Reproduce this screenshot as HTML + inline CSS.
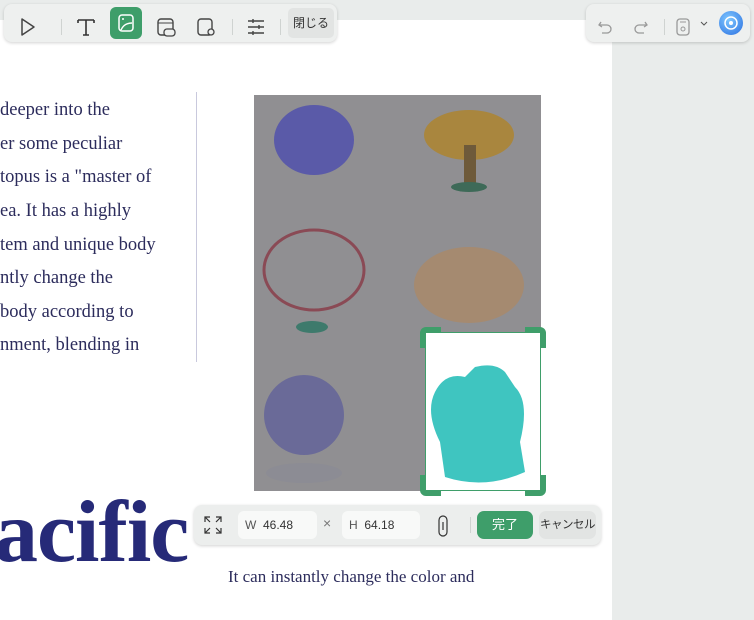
<!DOCTYPE html>
<html><head><meta charset="utf-8"><style>
*{margin:0;padding:0;box-sizing:border-box}
body{width:754px;height:604px;overflow:hidden;background:#e9eceb;position:relative;font-family:"Liberation Sans","Noto Sans CJK JP",sans-serif}
.page{position:absolute;left:0;top:20px;width:612px;height:600px;background:#fff}
.t{position:absolute;left:0;font-family:"Liberation Serif",serif;font-size:18.5px;color:#2c2c5c;white-space:nowrap}
.bar{position:absolute;background:#eef0ef;border-radius:8px;box-shadow:0 1px 3px rgba(0,0,0,.18)}
.ic{position:absolute;top:8px;width:30px;height:30px}
.sep{position:absolute;top:15px;width:1px;height:16px;background:#cfd3d1}
</style></head><body>
<div class="page"></div>
<div class="t" style="top:100px">deeper into the</div>
<div class="t" style="top:134px">er some peculiar</div>
<div class="t" style="top:167px">topus is a "master of</div>
<div class="t" style="top:201px">ea. It has a highly</div>
<div class="t" style="top:235px">tem and unique body</div>
<div class="t" style="top:268px">ntly change the</div>
<div class="t" style="top:302px"> body according to</div>
<div class="t" style="top:335px">nment, blending in</div>
<div style="position:absolute;left:196px;top:92px;width:1px;height:270px;background:#c9c9dd"></div>
<div style="position:absolute;left:-6px;top:482px;font-family:'Liberation Serif',serif;font-weight:bold;font-size:88px;letter-spacing:-1px;color:#262a78;white-space:nowrap">acific</div>
<div class="t" style="left:228px;top:567px;font-size:17px">It can instantly change the color and</div>

<svg style="position:absolute;left:254px;top:95px" width="287" height="396">
<rect width="287" height="396" fill="#908f92"/>
<ellipse cx="60" cy="45" rx="40" ry="35" fill="#5a5aa8"/>
<ellipse cx="215" cy="40" rx="45" ry="25" fill="#a9863e"/>
<rect x="210" y="50" width="12" height="40" fill="#6e5a3a"/>
<ellipse cx="215" cy="92" rx="18" ry="5" fill="#3e6a58"/>
<ellipse cx="60" cy="175" rx="50" ry="40" fill="none" stroke="#8a4a55" stroke-width="3"/>
<ellipse cx="58" cy="232" rx="16" ry="6" fill="#3e7a6c"/>
<ellipse cx="215" cy="190" rx="55" ry="38" fill="#a58a70"/>
<ellipse cx="50" cy="320" rx="40" ry="40" fill="#6a6a98"/>
<ellipse cx="50" cy="378" rx="38" ry="10" fill="#8c8c94"/>
</svg>
<div style="position:absolute;left:425px;top:332px;width:116px;height:159px;background:#fff;border:1px solid #3f9e6a"></div>
<svg style="position:absolute;left:420px;top:327px" width="126" height="169">
<path d="M15 65 Q25 45 45 50 L55 40 Q75 35 85 45 L95 60 Q110 75 100 115 L105 145 Q65 163 25 150 L20 115 Q5 85 15 65Z" fill="#3fc5c0"/>
<path d="M3 21V6a3 3 0 0 1 3-3h15M105 3h15a3 3 0 0 1 3 3v15M123 148v15a3 3 0 0 1-3 3H105M21 166H6a3 3 0 0 1-3-3v-15" stroke="#3f9e6a" stroke-width="6" fill="none"/>
</svg>

<div class="bar" style="left:4px;top:4px;width:333px;height:38px">
 <svg class="ic" style="left:8px" viewBox="0 0 30 30"><path d="M10 7l12 8-12 8z" fill="none" stroke="#444" stroke-width="1.5" stroke-linejoin="round"/><path d="M31 14l3 3 3-3" stroke="#555" fill="none"/></svg>
 <div class="sep" style="left:57px"></div>
 <svg class="ic" style="left:67px" viewBox="0 0 30 30"><path d="M7 8h16M7 8v3M23 8v3M15 8v15M12 23h6" stroke="#333" stroke-width="1.6" fill="none"/></svg>
 <div style="position:absolute;left:106px;top:3px;width:32px;height:32px;background:#3e9e6a;border-radius:6px"></div>
 <svg class="ic" style="left:107px;top:4px" viewBox="0 0 30 30"><rect x="8" y="7" width="14" height="16" rx="3" fill="none" stroke="#fff" stroke-width="1.5"/><path d="M10 22q3-7 11-7" stroke="#fff" fill="none" stroke-width="1.4"/><circle cx="12" cy="11" r="1" fill="#fff"/></svg>
 <svg class="ic" style="left:147px" viewBox="0 0 30 30"><rect x="7" y="7" width="15" height="16" rx="3" fill="none" stroke="#444" stroke-width="1.4"/><path d="M7 11h15" stroke="#444"/><rect x="13" y="17" width="11" height="7" rx="3" fill="#eef0ef" stroke="#444" stroke-width="1.3"/></svg>
 <svg class="ic" style="left:187px" viewBox="0 0 30 30"><rect x="7" y="7" width="14" height="16" rx="3" fill="none" stroke="#444" stroke-width="1.4"/><circle cx="20" cy="20" r="3" fill="#eef0ef" stroke="#444" stroke-width="1.3"/></svg>
 <div class="sep" style="left:228px"></div>
 <svg class="ic" style="left:237px" viewBox="0 0 30 30"><path d="M7 9h16M7 15h16M7 21h16M12 7v4M18 13v4M12 19v4" stroke="#444" stroke-width="1.4"/></svg>
 <div class="sep" style="left:276px"></div>
 <div style="position:absolute;left:284px;top:4px;width:46px;height:30px;background:#e2e4e3;border-radius:5px;font-size:12px;line-height:30px;text-align:center;color:#333">閉じる</div>
</div>

<div class="bar" style="left:586px;top:4px;width:164px;height:38px">
 <svg class="ic" style="left:4px" viewBox="0 0 30 30"><path d="M11 10l-2 3 3 2M9 13h8a4 4 0 0 1 0 8h-5" stroke="#999" fill="none" stroke-width="1.3"/></svg>
 <svg class="ic" style="left:40px" viewBox="0 0 30 30"><path d="M19 10l2 3-3 2M21 13h-8a4 4 0 0 0 0 8h5" stroke="#999" fill="none" stroke-width="1.3"/></svg>
 <div class="sep" style="left:78px"></div>
 <svg class="ic" style="left:82px" viewBox="0 0 30 30"><rect x="9" y="7" width="12" height="16" rx="3" fill="none" stroke="#999" stroke-width="1.3"/><circle cx="15" cy="17" r="2" fill="none" stroke="#999"/><path d="M12 10h6" stroke="#999"/></svg>
 <svg style="position:absolute;left:114px;top:17px" width="8" height="6"><path d="M1 1l3 3 3-3" stroke="#555" fill="none"/></svg>
 <div style="position:absolute;left:133px;top:7px;width:24px;height:24px;border-radius:50%;background:radial-gradient(circle at 40% 35%,#7fc7ff,#2a6fe0)"></div>
 <svg style="position:absolute;left:133px;top:7px" width="24" height="24"><circle cx="12" cy="12" r="6" fill="none" stroke="#fff" stroke-width="1.5"/><circle cx="12" cy="12" r="2" fill="#fff"/></svg>
</div>

<div class="bar" style="left:194px;top:505px;width:407px;height:40px;background:#eceeed">
 <svg style="position:absolute;left:10px;top:11px" width="18" height="18"><path d="M1 6V1h5M1 1l5 5M17 6V1h-5M17 1l-5 5M1 12v5h5M1 17l5-5M17 12v5h-5M17 17l-5-5" stroke="#333" fill="none" stroke-width="1.2"/></svg>
 <div style="position:absolute;left:44px;top:6px;width:79px;height:28px;background:#f8f9f8;border-radius:6px;font-size:12px;line-height:28px;padding-left:7px;color:#333"><span style="color:#555">W</span>&nbsp; 46.48</div>
 <div style="position:absolute;left:129px;top:10px;font-size:14px;color:#777">×</div>
 <div style="position:absolute;left:148px;top:6px;width:78px;height:28px;background:#f8f9f8;border-radius:6px;font-size:12px;line-height:28px;padding-left:7px;color:#333"><span style="color:#555">H</span>&nbsp; 64.18</div>
 <svg style="position:absolute;left:242px;top:10px" width="14" height="22"><rect x="3" y="1" width="8" height="20" rx="4" fill="none" stroke="#333" stroke-width="1.2"/><path d="M7 7v8" stroke="#333" stroke-width="1.2"/></svg>
 <div class="sep" style="left:276px;top:12px"></div>
 <div style="position:absolute;left:283px;top:6px;width:56px;height:28px;background:#3e9e6a;border-radius:7px;color:#fff;font-size:13px;line-height:28px;text-align:center">完了</div>
 <div style="position:absolute;left:345px;top:6px;width:57px;height:28px;background:#e2e4e3;border-radius:7px;color:#333;font-size:11.5px;line-height:28px;text-align:center;white-space:nowrap;letter-spacing:-0.5px">キャンセル</div>
</div>
</body></html>
